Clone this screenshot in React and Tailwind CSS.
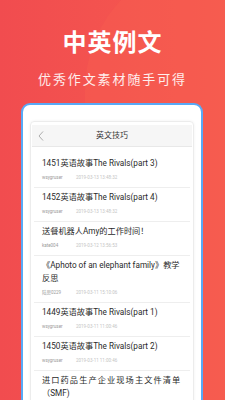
import React from "react";

const items = [
  { t: ["1451英语故事The Rivals(part 3)"], u: "wsygruser", d: "2019-03-13 13:48:32" },
  { t: ["1452英语故事The Rivals(part 4)"], u: "wsygruser", d: "2019-03-13 13:48:32" },
  { t: ["送餐机器人Amy的工作时间！"], u: "kate004", d: "2019-03-12 13:56:53" },
  { t: ["《Aphoto of an elephant family》教学", "反思"], u: "陆思0229", d: "2019-03-11 15:10:06" },
  { t: ["1449英语故事The Rivals(part 1)"], u: "wsygruser", d: "2019-03-11 11:00:46" },
  { t: ["1450英语故事The Rivals(part 2)"], u: "wsygruser", d: "2019-03-11 11:00:46" },
  { t: ["进口药品生产企业现场主文件清单", "（SMF)"], u: "", d: "", spaced: true },
];

export default function App() {
  return (
    <div
      className="relative w-[225px] h-[400px] overflow-hidden bg-gradient-to-r from-[#f14c4f] to-[#f65a4f] flex flex-col"
      style={{ fontFamily: 'Roboto, "Noto Sans CJK SC", sans-serif' }}
    >
      <div className="absolute -right-[120px] -top-[40px] w-[260px] h-[520px] rounded-full bg-[#f7604f] opacity-40" />
      <div className="relative flex flex-col items-center">
        <div className="mt-[28px] text-white text-[24px] leading-[30px] font-bold tracking-[1px]">中英例文</div>
        <div className="mt-[14px] text-white/90 text-[13px] leading-[16px] tracking-[1.9px]">优秀作文素材随手可得</div>
      </div>
      <div className="relative ml-[21px] mt-[15px] w-[182px] flex-1 rounded-t-[9px] border-2 border-b-0 border-[#58a9f6] bg-white px-[7px] pt-[16px]">
        <div className="h-full rounded-t-[4px] border border-[#ececec] shadow-[0_0_3px_rgba(0,0,0,0.06)]">
          <div className="relative mx-[1px] mt-[3px] h-[22px] bg-[#f6f6f6] border-b border-[#e8e8e8] flex items-center justify-center">
            <svg className="absolute left-[6px] top-[6px]" width="6" height="10" viewBox="0 0 6 10">
              <path d="M5 0.5 L1 5 L5 9.5" fill="none" stroke="#9a9a9a" strokeWidth="0.8" />
            </svg>
            <span className="text-[8px] leading-[10px] text-[#333]">英文技巧</span>
          </div>
          <div className="px-[3px] pt-[7px]">
            {items.map((it, i) => (
              <div key={i} className={i > 0 ? "border-t border-[#eeeeee]" : ""}>
                <div className="px-[8px] pt-[3px] pb-[6px]">
                  {it.t.map((line, j) => (
                    <div
                      key={j}
                      className={`text-[8.2px] leading-[13px] text-[#2a2a2a] whitespace-nowrap ${it.spaced && j === 0 ? "tracking-[1.1px]" : ""}`}
                    >
                      {line}
                    </div>
                  ))}
                  {it.u && (
                    <div className="mt-[4px] flex text-[4.5px] leading-[7px]">
                      <span className="w-[34px] text-[#9a9a9a]">{it.u}</span>
                      <span className="text-[#c4c4c4]">{it.d}</span>
                    </div>
                  )}
                </div>
              </div>
            ))}
          </div>
        </div>
      </div>
    </div>
  );
}
